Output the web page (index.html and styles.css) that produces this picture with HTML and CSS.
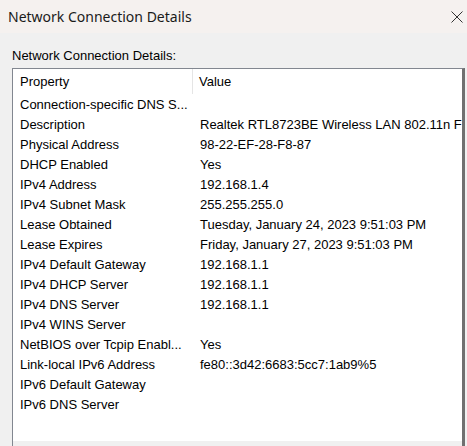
FILE: index.html
```html
<!DOCTYPE html>
<html>
<head>
<meta charset="utf-8">
<link rel="stylesheet" href="styles.css">
</head>
<body>
<div class="window">
  <div class="titlebar">
    <span class="title">Network Connection Details</span>
    <svg class="close" width="12" height="12" viewBox="0 0 12 12"><path d="M0.5 0.5 L11.5 11.5 M11.5 0.5 L0.5 11.5" stroke="#333" stroke-width="1" fill="none"/></svg>
  </div>
  <div class="content">
    <div class="label">Network Connection Details:</div>
    <div class="list">
      <div class="header">
        <div class="hcell prop">Property</div>
        <div class="hcell val">Value</div>
      </div>
      <div class="rows">
        <div class="row"><span class="k">Connection-specific DNS S...</span><span class="v"></span></div>
        <div class="row"><span class="k">Description</span><span class="v clip">Realtek RTL8723BE Wireless LAN 802.11n F</span></div>
        <div class="row"><span class="k">Physical Address</span><span class="v">98-22-EF-28-F8-87</span></div>
        <div class="row"><span class="k">DHCP Enabled</span><span class="v">Yes</span></div>
        <div class="row"><span class="k">IPv4 Address</span><span class="v">192.168.1.4</span></div>
        <div class="row"><span class="k">IPv4 Subnet Mask</span><span class="v">255.255.255.0</span></div>
        <div class="row"><span class="k">Lease Obtained</span><span class="v">Tuesday, January 24, 2023 9:51:03 PM</span></div>
        <div class="row"><span class="k">Lease Expires</span><span class="v">Friday, January 27, 2023 9:51:03 PM</span></div>
        <div class="row"><span class="k">IPv4 Default Gateway</span><span class="v">192.168.1.1</span></div>
        <div class="row"><span class="k">IPv4 DHCP Server</span><span class="v">192.168.1.1</span></div>
        <div class="row"><span class="k">IPv4 DNS Server</span><span class="v">192.168.1.1</span></div>
        <div class="row"><span class="k">IPv4 WINS Server</span><span class="v"></span></div>
        <div class="row"><span class="k">NetBIOS over Tcpip Enabl...</span><span class="v">Yes</span></div>
        <div class="row"><span class="k">Link-local IPv6 Address</span><span class="v">fe80::3d42:6683:5cc7:1ab9%5</span></div>
        <div class="row"><span class="k">IPv6 Default Gateway</span><span class="v"></span></div>
        <div class="row"><span class="k">IPv6 DNS Server</span><span class="v"></span></div>
      </div>
    </div>
  </div>
</div>
</body>
</html>
```
FILE: styles.css
```css
html, body {
  margin: 0;
  padding: 0;
  width: 467px;
  height: 446px;
  overflow: hidden;
  background: #f0f0f0;
}
.window {
  display: flex;
  flex-direction: column;
  height: 446px;
  font-family: "Liberation Sans", Arial, sans-serif;
  color: #000;
}
.titlebar {
  height: 33px;
  background: #f5f1ef;
  display: flex;
  align-items: center;
  justify-content: space-between;
  padding: 0 4px 0 8px;
  flex: none;
}
.title {
  font-family: "Noto Sans", "Open Sans", sans-serif;
  font-size: 14px;
  color: #1a1a1a;
}
.close {
  display: block;
}
.content {
  flex: 1;
  display: flex;
  flex-direction: column;
  padding: 15px 0 0 12px;
}
.label {
  font-size: 13px;
  line-height: 15px;
  padding-bottom: 5px;
  color: #000;
}
.list {
  flex: 1;
  background: #fff;
  border: 1px solid #828790;
  border-right: 3px solid #707070;
  border-bottom: none;
  margin-right: 2px;
  display: flex;
  flex-direction: column;
  box-shadow: inset 0 -5px 0 #f0f0f0;
}
.header {
  display: flex;
  height: 25px;
  align-items: stretch;
}
.hcell {
  font-size: 13px;
  display: flex;
  align-items: center;
}
.hcell.prop {
  width: 172px;
  padding-left: 7px;
  border-right: 1px solid #e5e5e5;
}
.hcell.val {
  padding-left: 6px;
}
.rows {
  display: flex;
  flex-direction: column;
}
.row {
  display: flex;
  height: 20px;
  align-items: center;
  font-size: 13px;
  white-space: nowrap;
  overflow: hidden;
}
.k {
  width: 180px;
  padding-left: 7px;
  flex: none;
  overflow: hidden;
}
.v {
  flex: none;
  padding-left: 0;
}
.v.clip {
  flex: 1;
  min-width: 0;
  overflow: hidden;
}
```
